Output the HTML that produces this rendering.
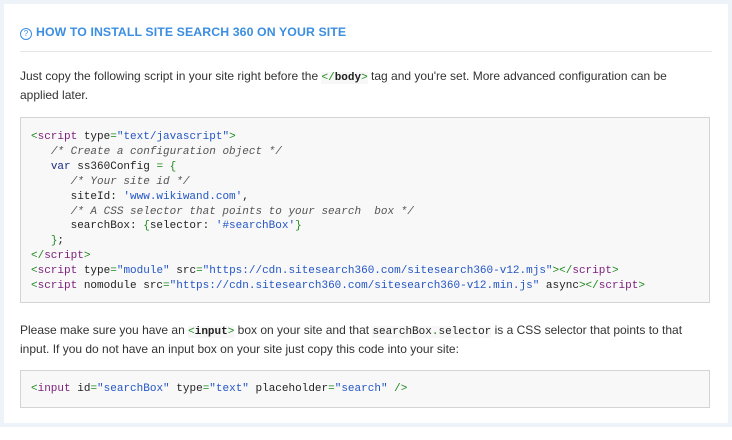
<!DOCTYPE html>
<html><head><meta charset="utf-8"><style>
body{margin:0;background:#eef2f9;width:732px;height:440px;overflow:hidden;font-family:"Liberation Sans",sans-serif;}
.card{position:absolute;left:4px;top:4px;width:724px;height:419px;background:#fff;}
.bottom{position:absolute;left:0;top:427px;width:732px;height:13px;background:#fff}
h2{position:absolute;left:16px;top:21px;margin:0;font-size:12.3px;font-weight:bold;color:#3b8ee0;letter-spacing:0.1px}
h2 .q{display:inline-block;width:10px;height:10px;border:1px solid #3b8ee0;border-radius:50%;font-size:8px;line-height:10px;text-align:center;font-weight:normal;margin-right:4px;vertical-align:0px}
.hr{position:absolute;left:16px;top:47px;width:692px;height:1px;background:#e6e6e6}
p{position:absolute;left:16px;margin:0;font-size:12px;line-height:17px;color:#333}
code.i{font-family:"Liberation Mono",monospace;font-size:11px;background:#f7f7f7;color:#222}
.box{position:absolute;left:16px;width:690px;background:#f8f8f8;border:1px solid #d4d4d4;font-family:"Liberation Mono",monospace;font-size:11px;line-height:14.9px;color:#222;white-space:pre;box-sizing:border-box;padding-left:10px}
.g{color:#1b8a1b}.t{color:#7b1d7b}.s{color:#2356c4}.c{color:#555;font-style:italic}
</style></head><body>
<div class="card">
<h2><span class="q">?</span>HOW TO INSTALL SITE SEARCH 360 ON YOUR SITE</h2>
<div class="hr"></div>
<p style="top:64px;width:680px">Just copy the following script in your site right before the <code class="i"><span class="g">&lt;/</span><b>body</b><span class="g">&gt;</span></code> tag and you're set. More advanced configuration can be applied later.</p>
<div class="box" style="top:113px;height:186px;padding-top:12px"><span class="g">&lt;</span><span class="t">script</span> type<span class="g">=</span><span class="s">"text/javascript"</span><span class="g">&gt;</span>
   <span class="c">/* Create a configuration object */</span>
   <span style="color:#1a2a8a">var</span> ss360Config <span class="g">=</span> <span class="g">{</span>
      <span class="c">/* Your site id */</span>
      siteId: <span class="s">'www.wikiwand.com'</span>,
      <span class="c">/* A CSS selector that points to your search  box */</span>
      searchBox: <span class="g">{</span>selector: <span class="s">'#searchBox'</span><span class="g">}</span>
   <span class="g">}</span>;
<span class="g">&lt;/</span><span class="t">script</span><span class="g">&gt;</span>
<span class="g">&lt;</span><span class="t">script</span> type<span class="g">=</span><span class="s">"module"</span> src<span class="g">=</span><span class="s">"https://cdn.sitesearch360.com/sitesearch360-v12.mjs"</span><span class="g">&gt;&lt;/</span><span class="t">script</span><span class="g">&gt;</span>
<span class="g">&lt;</span><span class="t">script</span> nomodule src<span class="g">=</span><span class="s">"https://cdn.sitesearch360.com/sitesearch360-v12.min.js"</span> async<span class="g">&gt;&lt;/</span><span class="t">script</span><span class="g">&gt;</span></div>
<p style="top:318px;width:680px">Please make sure you have an <code class="i"><span class="g">&lt;</span><b>input</b><span class="g">&gt;</span></code> box on your site and that <code class="i">searchBox<span class="g">.</span>selector</code> is a CSS selector that points to that input. If you do not have an input box on your site just copy this code into your site:</p>
<div class="box" style="top:366px;height:38px;padding-top:11px"><span class="g">&lt;</span><span class="t">input</span> id<span class="g">=</span><span class="s">"searchBox"</span> type<span class="g">=</span><span class="s">"text"</span> placeholder<span class="g">=</span><span class="s">"search"</span> <span class="g">/&gt;</span></div>
</div>
<div class="bottom"></div>
</body></html>
